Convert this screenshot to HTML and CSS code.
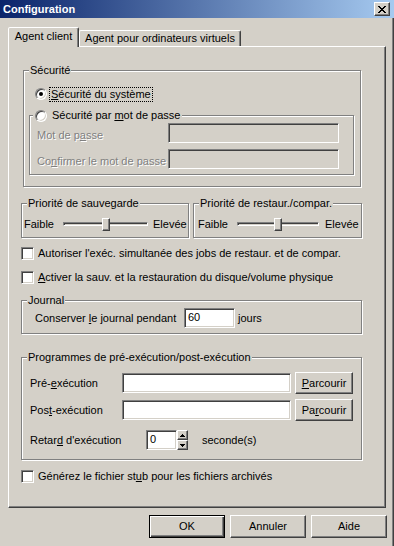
FILE: index.html
```html
<!DOCTYPE html>
<html>
<head>
<meta charset="utf-8">
<link rel="stylesheet" href="styles.css">
</head>
<body>
<div class="window">
  <div class="titlebar">
    <span class="title">Configuration</span>
    <span class="close"><svg width="8" height="7" viewBox="0 0 8 7" shape-rendering="crispEdges"><path d="M0 0h2v1H0zM6 0h2v1H6zM1 1h2v1H1zM5 1h2v1H5zM2 2h4v1H2zM3 3h2v1H3zM2 4h4v1H2zM1 5h2v1H1zM5 5h2v1H5zM0 6h2v1H0zM6 6h2v1H6z" fill="#000"/></svg></span>
  </div>
  <div class="main">
    <div class="tabs">
      <div class="tab active">Agent client</div>
      <div class="tab">Agent pour ordinateurs virtuels</div>
    </div>
    <div class="panel">
      <div class="group sec">
        <div class="gtitle">Sécurité</div>
        <div class="radiorow">
          <span class="radio checked"><span class="dot"></span></span>
          <span class="focus"><u>S</u>écurité du système</span>
        </div>
        <div class="group inner">
          <div class="gtitle ititle">
            <span class="radio"></span>
            <span class="rtext">Sécurité par <u>m</u>ot de passe</span>
          </div>
          <div class="prow">
            <span class="dis plabel">Mot de p<u>a</u>sse</span>
            <span class="edit disabled pedit"></span>
          </div>
          <div class="prow prow2">
            <span class="dis plabel">Co<u>n</u>firmer le mot de passe</span>
            <span class="edit disabled pedit"></span>
          </div>
        </div>
      </div>

      <div class="prios">
        <div class="group prio p1">
          <div class="gtitle">Priorité de sauvegarde</div>
          <div class="srow">
            <span class="flabel">Faible</span>
            <span class="track t1"><span class="thumb"></span></span>
            <span class="elev1">Elevée</span>
          </div>
        </div>
        <div class="group prio p2">
          <div class="gtitle">Priorité de restaur./compar.</div>
          <div class="srow">
            <span class="flabel">Faible</span>
            <span class="track t2"><span class="thumb"></span></span>
            <span class="elev2">Elevée</span>
          </div>
        </div>
      </div>

      <div class="cbrow cb1">
        <span class="cb"></span>
        <span>Autoriser l'exéc. simultanée des jobs de restaur. et de compar.</span>
      </div>
      <div class="cbrow cb2">
        <span class="cb"></span>
        <span><u>A</u>ctiver la sauv. et la restauration du disque/volume physique</span>
      </div>

      <div class="group journal">
        <div class="gtitle">Journal</div>
        <div class="jrow">
          <span class="jlabel">Conserver <u>l</u>e journal pendant</span>
          <span class="edit jedit">60</span>
          <span class="jours">jours</span>
        </div>
      </div>

      <div class="group prog">
        <div class="gtitle">Programmes de pré-exécution/post-exécution</div>
        <div class="grow">
          <span class="glabel">Pré-<u>e</u>xécution</span>
          <span class="edit gedit"></span>
          <span class="btn sbtn"><span><u>P</u>arcourir</span></span>
        </div>
        <div class="grow grow2">
          <span class="glabel">Pos<u>t</u>-exécution</span>
          <span class="edit gedit"></span>
          <span class="btn sbtn"><span>Pa<u>r</u>courir</span></span>
        </div>
        <div class="grow">
          <span class="rlabel">Retar<u>d</u> d'exécution</span>
          <span class="edit sedit">0</span>
          <span class="spin">
            <span class="spinbtn"><svg width="5" height="3" viewBox="0 0 5 3" shape-rendering="crispEdges"><path d="M2 0h1v1h1v1h1v1H0V2h1V1h1z" fill="#000"/></svg></span>
            <span class="spinbtn"><svg width="5" height="3" viewBox="0 0 5 3" shape-rendering="crispEdges"><path d="M0 0h5v1H4v1H3v1H2V2H1V1H0z" fill="#000"/></svg></span>
          </span>
          <span class="secs">seconde(s)</span>
        </div>
      </div>

      <div class="cbrow cb3">
        <span class="cb"></span>
        <span>Générez le fichier st<u>u</u>b pour les fichiers archivés</span>
      </div>
    </div>

    <div class="buttons">
      <span class="btn default"><span>OK</span></span>
      <span class="btn"><span>Annuler</span></span>
      <span class="btn"><span>Aide</span></span>
    </div>
  </div>
</div>
</body>
</html>
```
FILE: styles.css
```css
* { box-sizing: border-box; }
html, body { margin: 0; padding: 0; }
body {
  width: 394px;
  height: 546px;
  overflow: hidden;
  background: #d4d0c8;
  font-family: "Liberation Sans", Arial, sans-serif;
  font-size: 11px;
  line-height: 13px;
  color: #000;
}
u { text-decoration: underline; text-underline-offset: 1px; }

.window { width: 394px; height: 546px; }

.titlebar {
  height: 18px;
  display: flex;
  align-items: center;
  justify-content: space-between;
  padding: 0 4px 0 3px;
  background: linear-gradient(to right, #0a246a, #a6caf0);
}
.title { color: #fff; font-weight: bold; }
.close {
  width: 16px;
  height: 14px;
  display: flex;
  align-items: center;
  justify-content: center;
  background: #d4d0c8;
  border: 1px solid;
  border-color: #fff #404040 #404040 #fff;
  box-shadow: inset -1px -1px 0 #808080;
}
.close svg { display: block; }

.main {
  height: 528px;
  box-shadow: inset -1px 0 0 #404040, inset -2px 0 0 #808080;
}

/* tabs */
.tabs {
  display: flex;
  align-items: flex-end;
  padding: 9px 0 0 8px;
}
.tab {
  width: 162px;
  height: 16px;
  padding-top: 1px;
  text-align: center;
  white-space: nowrap;
  border: 1px solid;
  border-bottom: none;
  border-color: #fff #404040 transparent #fff;
  box-shadow: inset -1px 0 0 #808080;
  border-radius: 2px 2px 0 0;
}
.tab.active {
  width: 71px;
  height: 20px;
  padding-top: 2px;
  margin-bottom: -1px;
  position: relative;
  z-index: 1;
  background: #d4d0c8;
}

.panel {
  margin-left: 8px;
  width: 378px;
  height: 462px;
  border: 1px solid;
  border-color: #fff #404040 #404040 #fff;
  box-shadow: inset -1px -1px 0 #808080;
  padding: 0 23px 0 12px;
}

/* group boxes */
.group {
  border: 1px solid #808080;
  box-shadow: inset 1px 1px 0 #fff, 1px 1px 0 #fff;
}
.gtitle {
  width: fit-content;
  height: 13px;
  margin: -7px 0 0 5px;
  padding: 0 1px;
  background: #d4d0c8;
  white-space: nowrap;
}

.sec { margin: 23px 1px 0 2px; padding-bottom: 11px; }
.radiorow {
  display: flex;
  align-items: center;
  height: 14px;
  margin: 10px 0 0 11px;
}
.radio {
  flex: none;
  width: 12px;
  height: 12px;
  border-radius: 50%;
  background: #fff;
  border: 1px solid;
  border-color: #808080 #fff #fff #808080;
  box-shadow: inset 1px 1px 0 #404040, inset -1px -1px 0 #d4d0c8;
  display: flex;
  align-items: center;
  justify-content: center;
}
.dot { width: 4px; height: 4px; border-radius: 50%; background: #000; }
.focus {
  margin-left: 3px;
  padding: 0 1px;
  outline: 1px dotted #000;
  line-height: 13px;
}

.inner { margin: 14px 6px 0 5px; padding-bottom: 5px; }
.ititle {
  display: flex;
  align-items: center;
  margin-left: 3px;
  padding: 0 2px;
}
.rtext { margin-left: 5px; }
.prow {
  display: flex;
  align-items: center;
  height: 20px;
  margin: 1px 14px 0 7px;
}
.prow2 { margin-top: 6px; }
.plabel { flex: 1; white-space: nowrap; padding-top: 5px; }
.dis { color: #808080; text-shadow: 1px 1px 0 #fff; }

.edit {
  flex: none;
  height: 20px;
  padding: 2px 0 0 3px;
  background: #fff;
  border: 1px solid;
  border-color: #808080 #fff #fff #808080;
  box-shadow: inset 1px 1px 0 #404040, inset -1px -1px 0 #d4d0c8;
}
.edit.disabled { background: #d4d0c8; }
.pedit { width: 171px; }

/* priorities */
.prios {
  display: grid;
  grid-template-columns: 168px 169px;
  column-gap: 4px;
  margin-top: 16px;
}
.prio { padding-bottom: 3px; }
.srow {
  display: flex;
  align-items: center;
  height: 20px;
  margin-top: 4px;
  white-space: nowrap;
}
.p1 .srow { padding-left: 2px; }
.p2 .srow { padding-left: 4px; }
.flabel { width: 39px; flex: none; }
.track {
  position: relative;
  flex: none;
  height: 4px;
  border: 1px solid;
  border-color: #808080 #fff #fff #808080;
  box-shadow: inset 1px 1px 0 #404040, inset -1px -1px 0 #d4d0c8;
}
.t1 { width: 85px; }
.t2 { width: 82px; }
.thumb {
  position: absolute;
  top: -5px;
  left: calc(50% - 4px);
  width: 8px;
  height: 13px;
  background: #d4d0c8;
  border: 1px solid;
  border-color: #fff #404040 #404040 #fff;
  box-shadow: inset -1px -1px 0 #808080;
}
.elev1 { margin-left: 5px; }
.elev2 { margin-left: 6px; }

/* checkboxes */
.cbrow {
  display: flex;
  align-items: center;
  height: 13px;
  white-space: nowrap;
}
.cb1 { margin-top: 9px; }
.cb2 { margin-top: 11px; }
.cb3 { margin-top: 10px; }
.cb {
  flex: none;
  width: 13px;
  height: 13px;
  margin-right: 4px;
  background: #fff;
  border: 1px solid;
  border-color: #808080 #fff #fff #808080;
  box-shadow: inset 1px 1px 0 #404040, inset -1px -1px 0 #d4d0c8;
}

/* journal */
.journal { margin-top: 16px; padding-bottom: 5px; }
.jrow {
  display: flex;
  align-items: center;
  height: 20px;
  margin-top: 1px;
  padding-left: 13px;
  white-space: nowrap;
}
.jlabel { width: 149px; flex: none; }
.jedit { width: 51px; }
.jours { margin-left: 3px; }

/* programmes */
.prog { margin-top: 23px; padding-bottom: 8px; }
.grow {
  display: flex;
  align-items: center;
  height: 22px;
  margin-top: 8px;
  padding-left: 8px;
  white-space: nowrap;
}
.grow2 { margin-top: 5px; }
.glabel { width: 92px; flex: none; }
.gedit { width: 169px; }
.rlabel { width: 116px; flex: none; }
.sedit { width: 31px; }
.spin {
  flex: none;
  width: 11px;
  height: 20px;
  display: flex;
  flex-direction: column;
}
.spinbtn {
  height: 10px;
  display: flex;
  align-items: center;
  justify-content: center;
  background: #d4d0c8;
  border: 1px solid;
  border-color: #fff #404040 #404040 #fff;
  box-shadow: inset -1px -1px 0 #808080;
}
.spinbtn svg { display: block; }
.secs { margin-left: 14px; }

/* buttons */
.btn {
  flex: none;
  display: flex;
  align-items: center;
  justify-content: center;
  width: 76px;
  height: 23px;
  background: #d4d0c8;
  border: 1px solid;
  border-color: #fff #404040 #404040 #fff;
  box-shadow: inset -1px -1px 0 #808080;
  white-space: nowrap;
}
.sbtn { width: 58px; height: 22px; margin-left: 4px; }
.btn.default {
  border: 1px solid #000;
  box-shadow: inset 1px 1px 0 #fff, inset -1px -1px 0 #404040, inset -2px -2px 0 #808080;
}
.buttons {
  display: flex;
  justify-content: flex-end;
  gap: 5px;
  margin-top: 7px;
  padding-right: 7px;
}
```
